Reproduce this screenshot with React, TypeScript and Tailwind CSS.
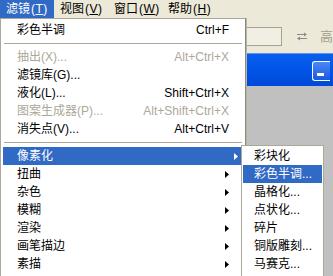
import React from 'react';

type Item =
  | { sep: true }
  | { label: string; key?: string; disabled?: boolean; sub?: boolean; active?: boolean };

const filterMenu: Item[] = [
  { label: '彩色半调', key: 'Ctrl+F' },
  { sep: true },
  { label: '抽出(X)...', key: 'Alt+Ctrl+X', disabled: true },
  { label: '滤镜库(G)...' },
  { label: '液化(L)...', key: 'Shift+Ctrl+X' },
  { label: '图案生成器(P)...', key: 'Alt+Shift+Ctrl+X', disabled: true },
  { label: '消失点(V)...', key: 'Alt+Ctrl+V' },
  { sep: true },
  { label: '像素化', sub: true, active: true },
  { label: '扭曲', sub: true },
  { label: '杂色', sub: true },
  { label: '模糊', sub: true },
  { label: '渲染', sub: true },
  { label: '画笔描边', sub: true },
  { label: '素描', sub: true },
];

const pixelateMenu = [
  { label: '彩块化' },
  { label: '彩色半调...', active: true },
  { label: '晶格化...' },
  { label: '点状化...' },
  { label: '碎片' },
  { label: '铜版雕刻...' },
  { label: '马赛克...' },
];

const menuBar = [
  { label: '滤镜', key: 'T', open: true },
  { label: '视图', key: 'V' },
  { label: '窗口', key: 'W' },
  { label: '帮助', key: 'H' },
];

function Arrow({ color }: { color: string }) {
  return (
    <svg width="4" height="7" viewBox="0 0 4 7" className="shrink-0">
      <path d="M0 0 L4 3.5 L0 7 Z" fill={color} />
    </svg>
  );
}

function SwapIcon() {
  return (
    <svg width="12" height="9" viewBox="0 0 12 9">
      <path d="M1 2.5 H9" stroke="#8a8a8a" strokeWidth="1" />
      <path d="M8 0.5 L11 2.5 L8 4.5 Z" fill="#8a8a8a" />
      <path d="M3 6.5 H11" stroke="#8a8a8a" strokeWidth="1" />
      <path d="M4 4.5 L1 6.5 L4 8.5 Z" fill="#8a8a8a" />
    </svg>
  );
}

export default function App() {
  return (
    <div className="relative w-[333px] h-[276px] overflow-hidden bg-[#c0c0c0] font-['Liberation_Sans','Noto_Sans_CJK_SC',sans-serif] text-[12px] leading-none text-black">
      {/* Menu bar */}
      <div className="flex h-[18px] bg-[#ece9d8]">
        {menuBar.map((m) => (
          <div
            key={m.label}
            className={
              m.open
                ? 'flex items-center h-full w-[54px] pl-[6px] bg-[#316ac5] text-white'
                : 'flex items-center h-full w-[54px] pl-[6px]'
            }
          >
            {m.label}
            <span className="ml-[1px] tracking-[0.5px]">
              (<span className="underline underline-offset-1">{m.key}</span>)
            </span>
          </div>
        ))}
      </div>

      {/* Toolbar */}
      <div className="flex items-center h-[35px] bg-[#ece9d8] pt-[1px]">
        <div className="ml-[224px] w-[60px] h-[19px] border border-[#a5a28f] bg-[#f1efe4]" />
        <div className="ml-[14px]">
          <SwapIcon />
        </div>
        <span className="ml-[12px] text-[#a39f8c] text-[13px]">高</span>
      </div>

      {/* Document window title bar */}
      <div className="h-[33px] border-t border-[#5a93f5] bg-gradient-to-b from-[#0a5fee] via-[#0055e8] to-[#0048d8] flex items-center justify-end">
        <div className="mr-[3px] mt-[1px] w-[18px] h-[20px] rounded-l-[3px] border border-r-0 border-white bg-gradient-to-b from-[#4a88f5] to-[#1a58e0] flex items-end pb-[4px] pl-[4px]">
          <div className="w-[7px] h-[3px] bg-white" />
        </div>
      </div>

      {/* Filter menu */}
      <div className="absolute left-0 top-[18px] w-[246px] h-[262px] bg-white border border-[#aca899] border-r-[#8d8a7c] px-[2px] pt-[2px] shadow-[1px_0_0_#b8b5a6]">
        {filterMenu.map((item, i) =>
          'sep' in item ? (
            <div key={i} className="h-[9px] flex items-center px-[1px]">
              <div className="w-full h-px bg-[#aca899]" />
            </div>
          ) : (
            <div
              key={i}
              className={
                item.active
                  ? 'flex items-center h-[18px] pl-[14px] pr-[5px] bg-[#316ac5] text-white'
                  : item.disabled
                    ? 'flex items-center h-[18px] pl-[14px] pr-[14px] text-[#aca899]'
                    : 'flex items-center h-[18px] pl-[14px] pr-[14px]'
              }
            >
              <span className="flex-1">{item.label}</span>
              {item.key && <span>{item.key}</span>}
              {item.sub && <Arrow color={item.active ? '#ffffff' : '#000000'} />}
            </div>
          ),
        )}
      </div>

      {/* Pixelate submenu */}
      <div className="absolute left-[241px] top-[145px] w-[83px] h-[140px] bg-white border border-[#aca899] px-[1px] pt-[1px]">
        {pixelateMenu.map((item) => (
          <div
            key={item.label}
            className={
              item.active
                ? 'flex items-center h-[18px] pl-[11px] bg-[#316ac5] text-white'
                : 'flex items-center h-[18px] pl-[11px]'
            }
          >
            {item.label}
          </div>
        ))}
      </div>
    </div>
  );
}
